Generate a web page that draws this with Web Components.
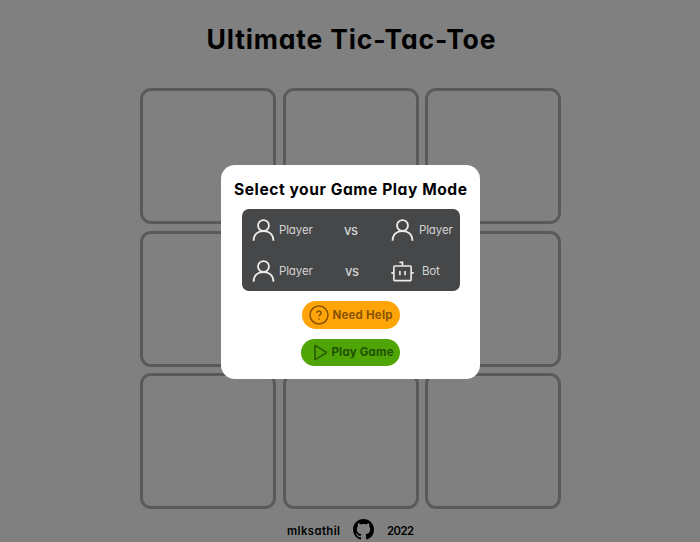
<!DOCTYPE html>
<html lang="en">
<head>
<meta charset="utf-8">
<title>Ultimate Tic-Tac-Toe</title>
<style>
html,body{margin:0;height:100%;overflow:hidden;background:#808080}
body{font-family:Inter,"Liberation Sans",sans-serif;font-feature-settings:"cv11";color:#000}
</style>
</head>
<body>
<game-page></game-page>
<script>
const define = (name, markup, setup) => {
  const template = document.createElement('template');
  template.innerHTML = markup;
  customElements.define(name, class extends HTMLElement {
    connectedCallback() {
      if (this.shadowRoot) return;
      this.attachShadow({mode: 'open'}).append(template.content.cloneNode(true));
      if (setup) setup(this, this.shadowRoot);
    }
  });
};

// A one-line label whose tracking is adjusted to fill the given width.
define('fit-label', `<style>
:host{display:block;white-space:nowrap;flex:none}
span{display:inline-block;white-space:nowrap}
</style><span><slot></slot></span>`, (host, root) => {
  const width = +host.getAttribute('width');
  const span = root.querySelector('span');
  host.style.width = width + 'px';
  const count = host.textContent.length;
  const gap = (width - span.getBoundingClientRect().width) / (count - 1);
  span.style.letterSpacing = gap + 'px';
});

const icons = {
  user: `<svg viewBox="0 0 24 24" stroke-width="1.9"><circle cx="12" cy="6.800" r="5.7"/><path d="M1.600 22.600C1.800 16.100 6.200 12.500 12 12.500S22.200 16.100 22.400 22.600"/></svg>`,
  bot: `<svg viewBox="0 0 24 24" stroke-width="1.7"><rect x="3" y="6.200" width="18" height="15.300" rx="1"/><path d="M8.800 2.500H12V6M.3 13.500H3M21 13.500H23.700M9.300 11.500V15.800M14.700 11.500V15.800"/></svg>`,
  help: `<svg viewBox="0 0 20 20" stroke-width="1.5"><circle cx="10" cy="10" r="9"/><path d="M7.900 8.100C7.900 5.200 12.200 5.300 12.200 8C12.200 9.600 10 9.600 10 11.600"/><path d="M10 13.500V14.700"/></svg>`,
  play: `<svg viewBox="0 0 20 20" stroke-width="1.5" stroke-linejoin="round"><path d="M4.200 3.200V16.800Q4.200 17.600 5 17.100L15.500 10.700Q16.500 10 15.500 9.300L5 2.900Q4.200 2.400 4.200 3.200Z"/></svg>`,
  github: `<svg viewBox="0 0 16 16"><path fill="currentColor" stroke="none" d="M8 0C3.580 0 0 3.580 0 8c0 3.540 2.290 6.530 5.470 7.590.4.070.55-.17.55-.38 0-.19-.01-.82-.01-1.490-2.010.37-2.530-.49-2.690-.94-.09-.23-.48-.94-.82-1.130-.28-.15-.68-.52-.01-.53.63-.01 1.080.58 1.230.82.72 1.210 1.870.87 2.330.66.07-.52.28-.87.51-1.070-1.780-.2-3.640-.89-3.640-3.950 0-.87.31-1.590.82-2.150-.08-.2-.36-1.020.08-2.120 0 0 .67-.21 2.200.82.64-.18 1.320-.27 2-.27s1.360.09 2 .27c1.530-1.040 2.200-.82 2.200-.82.44 1.100.16 1.920.08 2.120.51.56.82 1.270.82 2.150 0 3.070-1.870 3.750-3.650 3.950.29.25.54.73.54 1.480 0 1.070-.01 1.930-.01 2.200 0 .21.15.46.55.38A8.010 8.010 0 0 0 16 8c0-4.420-3.580-8-8-8Z"/></svg>`
};
define('line-icon', `<style>
:host{display:block;flex:none}
svg{display:block;width:100%;height:100%;fill:none;stroke:currentColor}
</style>`, (host, root) => root.append(
  document.createRange().createContextualFragment(icons[host.getAttribute('name')])));

define('board-cell', `<style>:host{display:block;box-sizing:border-box;border:3px solid #5a5a5a;border-radius:11px}</style>`);
define('game-board', `<style>
:host{display:grid;grid-template-columns:repeat(3,136px);grid-auto-rows:136px;gap:6.500px}
</style>` + '<board-cell></board-cell>'.repeat(9));

define('player-row', `<style>
:host{display:grid;grid-template-columns:27px 65px 47px 1fr;align-items:center;height:40.700px;color:#d4d4d4;font-size:11.500px}
line-icon{width:23px;height:23px;color:#ececec}
.vs{font-size:13px;font-weight:500;padding-left:var(--vs-shift,0)}
</style>
<line-icon name="user"></line-icon>
<fit-label width="34">Player</fit-label>
<fit-label class="vs" width="14">vs</fit-label>
<slot></slot>`);

define('side-label', `<style>
:host{display:flex;align-items:center;gap:var(--gap,4px)}
line-icon{width:23px;height:23px;color:#ececec}
</style><slot></slot>`, (host, root) => {
  const icon = document.createElement('line-icon');
  icon.setAttribute('name', host.getAttribute('icon'));
  root.insertBefore(icon, root.querySelector('slot'));
});

define('pill-button', `<style>
:host{display:flex;align-items:center;box-sizing:border-box;height:27.500px;border-radius:14px;font-size:11.500px;font-weight:700}
</style><slot></slot>`);

define('mode-dialog', `<style>
:host{display:flex;flex-direction:column;align-items:center;box-sizing:border-box;width:259px;height:214px;background:#fff;border-radius:14px;padding-top:15px}
.title{font-size:15.600px;line-height:20px;font-weight:700}
.modes{box-sizing:border-box;width:218px;height:82px;margin-top:9px;padding:1px 0 0 10.400px;border-radius:7px;background:#464749}
.help{width:98px;margin-top:10px;padding-left:7px;gap:4px;background:#ffa50a;color:#885300}
.help line-icon{width:20px;height:20px}
.play{width:99px;margin-top:10px;padding-left:10px;gap:1.500px;background:#4fa406;color:#205100}
.play line-icon{width:19px;height:19px}
</style>
<fit-label class="title" width="233">Select your Game Play Mode</fit-label>
<div class="modes">
<player-row><side-label icon="user" style="--gap:5px"><fit-label width="34">Player</fit-label></side-label></player-row>
<player-row style="--gap:8px;--vs-shift:1.200px"><side-label icon="bot"><fit-label width="18">Bot</fit-label></side-label></player-row>
</div>
<pill-button class="help" role="button"><line-icon name="help"></line-icon><fit-label width="60">Need Help</fit-label></pill-button>
<pill-button class="play" role="button"><line-icon name="play"></line-icon><fit-label width="62">Play Game</fit-label></pill-button>`);

define('page-footer', `<style>
:host{display:flex;align-items:center;height:22px;gap:13px;font-size:11.300px;font-weight:600}
fit-label{padding-top:4px}
line-icon{width:21px;height:21px}
</style>
<fit-label width="53">mlksathil</fit-label><line-icon name="github"></line-icon><fit-label width="27">2022</fit-label>`);

define('game-page', `<style>
:host{display:flex;flex-direction:column;align-items:center;width:700px;height:542px;position:relative}
.heading{margin-top:22px;font-size:26.500px;line-height:34px;font-weight:700}
game-board{margin:32px 0 0 1px}
page-footer{margin-top:9px;margin-left:1px}
mode-dialog{position:absolute;left:221px;top:165px}
</style>
<fit-label class="heading" width="289" style="margin-left:2px">Ultimate Tic-Tac-Toe</fit-label>
<game-board></game-board>
<page-footer></page-footer>
<mode-dialog></mode-dialog>`);
</script>
</body>
</html>
